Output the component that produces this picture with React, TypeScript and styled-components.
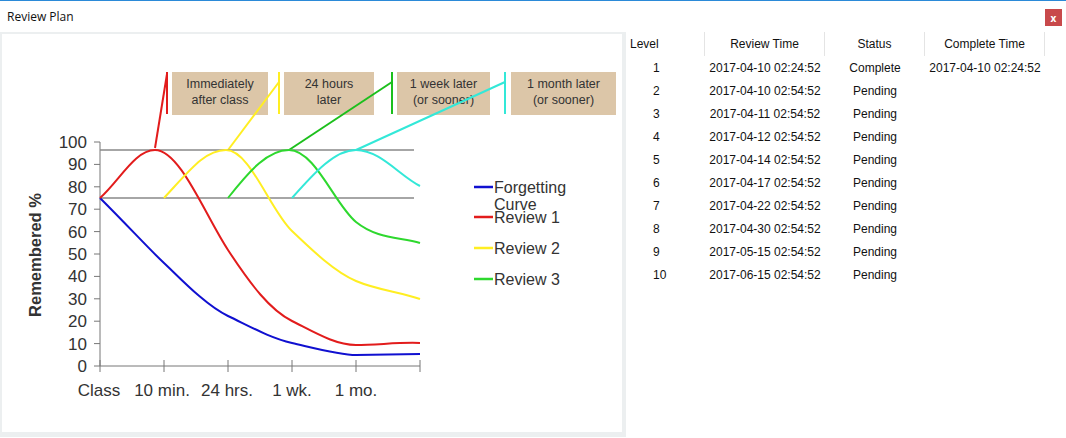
import React from "react";
import styled, { createGlobalStyle } from "styled-components";

const Global = createGlobalStyle`
  html, body { margin: 0; padding: 0; background: #fff; }
  body { font-family: "Liberation Sans", Arial, sans-serif; }
`;

const Window = styled.div`
  width: 1066px; height: 438px; box-sizing: border-box;
  border-top: 1px solid #2b8ad8; display: flex; flex-direction: column;
`;
const TitleBar = styled.div`
  height: 31px; display: flex; align-items: center; justify-content: space-between;
  padding: 0 4px 0 7px; font-size: 12px; color: #111; font-family: "Open Sans", sans-serif;
`;
const Close = styled.div`
  width: 17px; height: 17px; background: #c8494b; color: #fff; font-size: 10px; font-weight: bold;
  display: flex; align-items: center; justify-content: center; margin-top: 2px;
`;
const Body = styled.div`display: flex; flex: 1;`;
const ChartPanel = styled.div`
  width: 626px; height: 405px; box-sizing: border-box; background: #eceff0; padding: 2px;
`;
const ChartInner = styled.div`background: #fff; width: 620px; height: 398px;`;
const Table = styled.div`flex: 1; display: flex; flex-direction: column; font-size: 12px; color: #111; font-family: "Liberation Sans", Arial, sans-serif;`;
const Row = styled.div<{ $head?: boolean }>`
  display: grid; grid-template-columns: 79px 120px 100px 120px; height: ${p => (p.$head ? 24 : 23)}px;
  align-items: center;
`;
const Cell = styled.div<{ $head?: boolean; $left?: boolean; $num?: boolean }>`
  height: 100%; display: flex; align-items: center;
  justify-content: ${p => (p.$left || p.$num ? "flex-start" : "center")};
  padding-left: ${p => (p.$left ? 4 : p.$num ? 27 : 0)}px;
  border-right: ${p => (p.$head ? "1px solid #e4e4e4" : "none")};
  box-sizing: border-box;
`;

const rows = [
  ["1", "2017-04-10 02:24:52", "Complete", "2017-04-10 02:24:52"],
  ["2", "2017-04-10 02:54:52", "Pending", ""],
  ["3", "2017-04-11 02:54:52", "Pending", ""],
  ["4", "2017-04-12 02:54:52", "Pending", ""],
  ["5", "2017-04-14 02:54:52", "Pending", ""],
  ["6", "2017-04-17 02:54:52", "Pending", ""],
  ["7", "2017-04-22 02:54:52", "Pending", ""],
  ["8", "2017-04-30 02:54:52", "Pending", ""],
  ["9", "2017-05-15 02:54:52", "Pending", ""],
  ["10", "2017-06-15 02:54:52", "Pending", ""],
];

const ox = -2, oy = -34;
const P = (x: number, y: number) => `${x + ox},${y + oy}`;

const Chart = () => {
  const yv = (v: number) => 366 - 2.24 * v + oy;
  const ticksX = [100, 164, 228, 292, 356, 420];
  const box = (x1: number, x2: number, l1: string, l2: string) => (
    <g key={l1}>
      <rect x={x1 + ox} y={72 + oy} width={x2 - x1} height={43} fill="#dcc6a8" />
      <text x={(x1 + x2) / 2 + ox} y={88 + oy} textAnchor="middle" fontSize="12.5" fill="#333" fontFamily="Liberation Sans, Arial, sans-serif">{l1}</text>
      <text x={(x1 + x2) / 2 + ox} y={104 + oy} textAnchor="middle" fontSize="12.5" fill="#333" fontFamily="Liberation Sans, Arial, sans-serif">{l2}</text>
    </g>
  );
  return (
    <svg width="620" height="398" fontFamily="Liberation Sans, Arial, sans-serif">
      {box(172, 268, "Immediately", "after class")}
      {box(284, 374, "24 hours", "later")}
      {box(397, 490, "1 week later", "(or sooner)")}
      {box(511, 616, "1 month later", "(or sooner)")}
      <line x1={167 + ox} y1={72 + oy} x2={167 + ox} y2={114 + oy} stroke="#e21c1c" strokeWidth="2" />
      <line x1={279 + ox} y1={72 + oy} x2={279 + ox} y2={114 + oy} stroke="#ffee22" strokeWidth="2" />
      <line x1={392 + ox} y1={72 + oy} x2={392 + ox} y2={114 + oy} stroke="#1cbf1c" strokeWidth="2" />
      <line x1={505 + ox} y1={72 + oy} x2={505 + ox} y2={114 + oy} stroke="#33e8d8" strokeWidth="2" />
      <polyline points={`${P(155, 148)} ${P(167, 74)}`} stroke="#e21c1c" strokeWidth="2" fill="none" />
      <polyline points={`${P(228, 150)} ${P(279, 82)}`} stroke="#ffee22" strokeWidth="2" fill="none" />
      <polyline points={`${P(289, 150)} ${P(392, 82)}`} stroke="#1cbf1c" strokeWidth="2" fill="none" />
      <polyline points={`${P(356, 150)} ${P(505, 82)}`} stroke="#33e8d8" strokeWidth="2" fill="none" />
      <line x1={100 + ox} y1={142 + oy} x2={100 + ox} y2={366 + oy} stroke="#777" />
      <line x1={100 + ox} y1={366 + oy} x2={420 + ox} y2={366 + oy} stroke="#777" />
      {Array.from({ length: 11 }, (_, i) => (
        <g key={i}>
          <line x1={94 + ox} x2={100 + ox} y1={yv(i * 10)} y2={yv(i * 10)} stroke="#777" />
          <text x={87 + ox} y={yv(i * 10) + 6} textAnchor="end" fontSize="17" fill="#333">{i * 10}</text>
        </g>
      ))}
      {ticksX.map(x => <line key={x} x1={x + ox} x2={x + ox} y1={360 + oy} y2={372 + oy} stroke="#777" />)}
      {[["Class", 99], ["10 min.", 162], ["24 hrs.", 227], ["1 wk.", 292], ["1 mo.", 356]].map(([t, x]) => (
        <text key={t as string} x={(x as number) + ox} y={396 + oy} textAnchor="middle" fontSize="17" fill="#333">{t}</text>
      ))}
      <text transform={`translate(${41 + ox},${255 + oy}) rotate(-90)`} textAnchor="middle" fontSize="16.5" fontWeight="bold" fill="#333">Remembered %</text>
      <line x1={100 + ox} x2={414 + ox} y1={150 + oy} y2={150 + oy} stroke="#888" strokeWidth="1.5" />
      <line x1={100 + ox} x2={414 + ox} y1={198 + oy} y2={198 + oy} stroke="#888" strokeWidth="1.5" />
      <path d={`M${P(100, 198)} C${P(130, 228)} ${P(150, 250)} ${P(164, 263)} S${P(205, 305)} ${P(228, 316)} S${P(270, 338)} ${P(292, 343)} S${P(340, 355)} ${P(356, 355)} L${P(420, 354)}`} stroke="#1010d0" strokeWidth="2" fill="none" />
      <path d={`M${P(100, 198)} C${P(120, 180)} ${P(135, 150)} ${P(155, 150)} C${P(180, 150)} ${P(205, 215)} ${P(228, 250)} S${P(270, 310)} ${P(292, 321)} S${P(335, 345)} ${P(356, 345)} S${P(400, 342)} ${P(420, 343)}`} stroke="#e21c1c" strokeWidth="2" fill="none" />
      <path d={`M${P(164, 198)} C${P(190, 170)} ${P(205, 150)} ${P(226, 150)} C${P(250, 150)} ${P(270, 210)} ${P(292, 231)} S${P(335, 272)} ${P(356, 281)} S${P(400, 292)} ${P(420, 299)}`} stroke="#ffee22" strokeWidth="2" fill="none" />
      <path d={`M${P(228, 198)} C${P(250, 170)} ${P(268, 150)} ${P(289, 150)} C${P(315, 150)} ${P(335, 205)} ${P(356, 222)} S${P(400, 237)} ${P(420, 243)}`} stroke="#2ed82e" strokeWidth="2" fill="none" />
      <path d={`M${P(292, 198)} C${P(315, 172)} ${P(335, 150)} ${P(356, 150)} C${P(380, 150)} ${P(400, 176)} ${P(420, 186)}`} stroke="#33e8d8" strokeWidth="2" fill="none" />
      {[["#1010d0", 187, "Forgetting"], ["#e21c1c", 217, "Review 1"], ["#ffee22", 248, "Review 2"], ["#2ed82e", 279, "Review 3"]].map(([c, y, t]) => (
        <g key={t as string}>
          <line x1={474 + ox} x2={493 + ox} y1={(y as number) + oy} y2={(y as number) + oy} stroke={c as string} strokeWidth="2.5" />
          <text x={494 + ox} y={(y as number) + 6 + oy} fontSize="16" fill="#333">{t}</text>
        </g>
      ))}
      <text x={494 + ox} y={210 + oy} fontSize="16" fill="#333">Curve</text>
    </svg>
  );
};

export default function App() {
  return (
    <>
      <Global />
      <Window>
        <TitleBar>
          <span>Review Plan</span>
          <Close>x</Close>
        </TitleBar>
        <Body>
          <ChartPanel>
            <ChartInner><Chart /></ChartInner>
          </ChartPanel>
          <Table>
            <Row $head>
              <Cell $head $left>Level</Cell>
              <Cell $head>Review Time</Cell>
              <Cell $head>Status</Cell>
              <Cell $head>Complete Time</Cell>
            </Row>
            {rows.map(r => (
              <Row key={r[0]}>
                <Cell $num>{r[0]}</Cell>
                <Cell>{r[1]}</Cell>
                <Cell>{r[2]}</Cell>
                <Cell>{r[3]}</Cell>
              </Row>
            ))}
          </Table>
        </Body>
      </Window>
    </>
  );
}
